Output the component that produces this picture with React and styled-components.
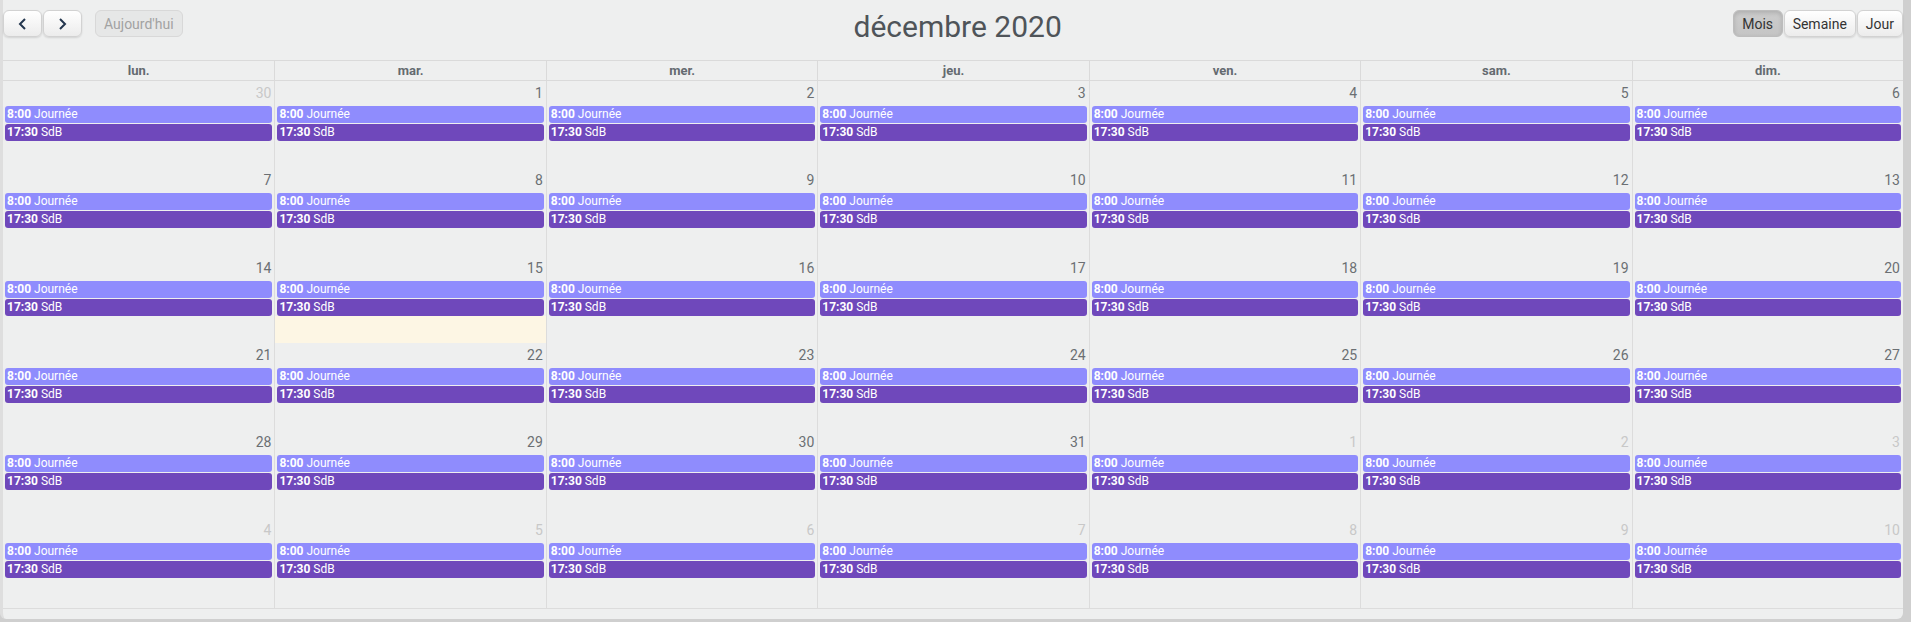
import React from 'react';
import styled, { createGlobalStyle, css } from 'styled-components';

const Global = createGlobalStyle`
  html, body {margin: 0; padding: 0; background: #cfcfcf; overflow: hidden;}
  body {font-family: Roboto, "Liberation Sans", Arial, sans-serif;}
`;

const Frame = styled.div`
  width: 1900px;
  height: 619px;
  background: #eeefef;
  border-left: 3px solid #dedede;
  border-radius: 0 0 6px 6px;
  display: flex;
  flex-direction: column;
  box-sizing: content-box;
`;

const Toolbar = styled.div`
  height: 60px;
  display: flex;
  align-items: flex-start;
  padding-top: 10px;
  box-sizing: border-box;
`;

const Group = styled.div`
  display: flex;
  align-items: center;
  gap: ${p => p.$gap || 0}px;
`;

const Title = styled.h2`
  flex: 1;
  margin: -1px 0 0;
  text-align: center;
  font-size: 30px;
  line-height: 36px;
  font-weight: 400;
  color: #4f5459;
`;

const Button = styled.button`
  height: 27px;
  padding: 0 ${p => p.$pad || 8}px;
  min-width: ${p => p.$w || 0}px;
  font-family: Roboto, "Liberation Sans", Arial, sans-serif;
  font-size: 14px;
  color: #333;
  border: 1px solid #d2d2d2;
  border-radius: 6px;
  background: linear-gradient(#ffffff, #ececec);
  box-shadow: 0 1px 2px rgba(0, 0, 0, 0.12);
  display: flex;
  align-items: center;
  justify-content: center;
  box-sizing: border-box;
  cursor: pointer;

  ${p => p.$active && css`
    background: linear-gradient(#cdcdcd, #c4c4c4);
    border-color: #bdbdbd;
    box-shadow: inset 0 2px 4px rgba(0, 0, 0, 0.15);
  `}

  ${p => p.disabled && css`
    background: #e6e7e7;
    color: #a2a2a2;
    border-color: #d8d8d8;
    box-shadow: none;
    cursor: default;
  `}
`;

const HeadRow = styled.div`
  display: grid;
  grid-template-columns: repeat(7, 1fr);
  border-top: 1px solid #dadada;
  border-bottom: 1px solid #dadada;
`;

const HeadCell = styled.div`
  height: 19px;
  line-height: 19px;
  text-align: center;
  font-size: 13px;
  font-weight: 700;
  color: #646a70;
  border-left: ${p => (p.$first ? 'none' : '1px solid #dadada')};
`;

const Body = styled.div`
  border-bottom: 1px solid #dcdcdc;
`;

const Week = styled.div`
  display: grid;
  grid-template-columns: repeat(7, 1fr);
  height: ${p => p.$h}px;
`;

const Day = styled.div`
  display: flex;
  flex-direction: column;
  min-width: 0;
  border-left: ${p => (p.$first ? 'none' : '1px solid #dcdcdc')};
`;

const Num = styled.div`
  height: 25px;
  line-height: 25px;
  text-align: right;
  padding-right: 3px;
  font-size: 14px;
  color: ${p => (p.$other ? '#c8c8c8' : '#6b6f73')};
`;

const Event = styled.div`
  height: 17px;
  line-height: 17px;
  margin: 0 2px 1px;
  padding: 0 2px;
  border-radius: 3px;
  font-size: 12px;
  color: #fff;
  white-space: nowrap;
  overflow: hidden;
  background: ${p => p.$color};

  b {font-weight: 700;}
`;

const Filler = styled.div`
  flex: 1;
  margin-top: -1px;
  background: ${p => (p.$today ? '#fdf6e4' : 'transparent')};
`;

const Chevron = ({ dir }) => (
  <svg width="9" height="12" viewBox="0 0 9 12">
    <path
      d={dir === 'left' ? 'M7 1 L2 6 L7 11' : 'M2 1 L7 6 L2 11'}
      fill="none"
      stroke="#23364e"
      strokeWidth="2"
    />
  </svg>
);

const days = ['lun.', 'mar.', 'mer.', 'jeu.', 'ven.', 'sam.', 'dim.'];

const weeks = [
  [{ n: 30, o: true }, 1, 2, 3, 4, 5, 6],
  [7, 8, 9, 10, 11, 12, 13],
  [14, 15, 16, 17, 18, 19, 20],
  [21, 22, 23, 24, 25, 26, 27],
  [28, 29, 30, 31, { n: 1, o: true }, { n: 2, o: true }, { n: 3, o: true }],
  [4, 5, 6, 7, 8, 9, 10].map(n => ({ n, o: true })),
];

export default function App() {
  return (
    <>
      <Global />
      <Frame>
        <Toolbar>
          <Group $gap={13}>
            <Group $gap={1}>
              <Button $w={39}><Chevron dir="left" /></Button>
              <Button $w={39}><Chevron dir="right" /></Button>
            </Group>
            <Button disabled $pad={8}>Aujourd'hui</Button>
          </Group>
          <Title>décembre 2020</Title>
          <Group $gap={1}>
            <Button $active $w={50}>Mois</Button>
            <Button $w={70}>Semaine</Button>
            <Button $w={45}>Jour</Button>
          </Group>
        </Toolbar>
        <HeadRow>
          {days.map((d, i) => <HeadCell key={d} $first={i === 0}>{d}</HeadCell>)}
        </HeadRow>
        <Body>
          {weeks.map((w, wi) => (
            <Week key={wi} $h={wi === weeks.length - 1 ? 90 : 87.33}>
              {w.map((d, i) => {
                const n = typeof d === 'number' ? d : d.n;
                const other = typeof d !== 'number';
                return (
                  <Day key={i} $first={i === 0}>
                    <Num $other={other}>{n}</Num>
                    <Event $color="#8f8cfd"><b>8:00</b> Journée</Event>
                    <Event $color="#6f48bb"><b>17:30</b> SdB</Event>
                    <Filler $today={!other && n === 15} />
                  </Day>
                );
              })}
            </Week>
          ))}
        </Body>
      </Frame>
    </>
  );
}
